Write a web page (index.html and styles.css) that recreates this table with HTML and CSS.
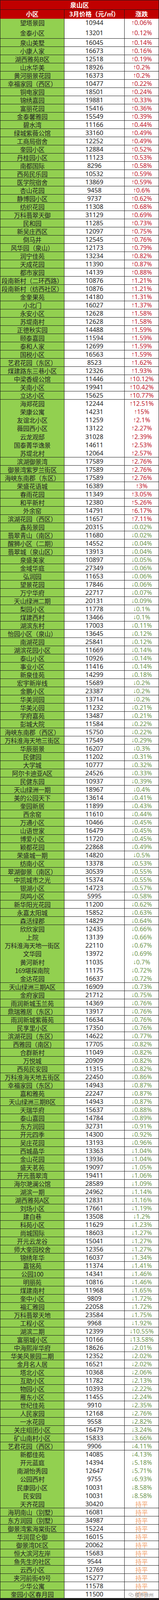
FILE: index.html
```html
<!DOCTYPE html>
<html lang="zh-CN">
<head>
<meta charset="utf-8">
<meta name="viewport" content="width=device-width, initial-scale=1">
<title>泉山区</title>
<link rel="stylesheet" href="styles.css">
</head>
<body>
<div class="sheet">
<div class="grid">
<div class="title">泉山区</div>
<div class="hd">小区</div><div class="hd">3月价格（元/㎡）</div><div class="hd">涨跌</div>
<div class="n">望塔景园</div><div class="p">10944</div><div class="u"><span class="a">↑</span>0.06%</div>
<div class="n">金泰小区</div><div class="p">13201</div><div class="u"><span class="a">↑</span>0.12%</div>
<div class="n">泉山美墅</div><div class="p">16045</div><div class="u"><span class="a">↑</span>0.14%</div>
<div class="n">小康人家</div><div class="p">16673</div><div class="u"><span class="a">↑</span>0.16%</div>
<div class="n">湖西雅苑B区</div><div class="p">12518</div><div class="u"><span class="a">↑</span>0.19%</div>
<div class="n">山水华美</div><div class="p">18926</div><div class="u"><span class="a">↑</span>0.2%</div>
<div class="n">黄河丽景花园</div><div class="p">16373</div><div class="u"><span class="a">↑</span>0.2%</div>
<div class="n">幸福家园（西区）</div><div class="p">10477</div><div class="u"><span class="a">↑</span>0.22%</div>
<div class="n">铜电家园</div><div class="p">18501</div><div class="u"><span class="a">↑</span>0.24%</div>
<div class="n">锦绣嘉园</div><div class="p">19881</div><div class="u"><span class="a">↑</span>0.33%</div>
<div class="n">富丽花园</div><div class="p">15416</div><div class="u"><span class="a">↑</span>0.36%</div>
<div class="n">金泰馨雅园</div><div class="p">15549</div><div class="u"><span class="a">↑</span>0.39%</div>
<div class="n">碧水湾</div><div class="p">11166</div><div class="u"><span class="a">↑</span>0.44%</div>
<div class="n">绿城紫薇公馆</div><div class="p">33160</div><div class="u"><span class="a">↑</span>0.49%</div>
<div class="n">工商局宿舍</div><div class="p">12252</div><div class="u"><span class="a">↑</span>0.49%</div>
<div class="n">奎园小区</div><div class="p">12884</div><div class="u"><span class="a">↑</span>0.52%</div>
<div class="n">丹桂园小区</div><div class="p">11123</div><div class="u"><span class="a">↑</span>0.53%</div>
<div class="n">南都国际</div><div class="p">8296</div><div class="u"><span class="a">↑</span>0.58%</div>
<div class="n">西苑民乐园</div><div class="p">10532</div><div class="u"><span class="a">↑</span>0.59%</div>
<div class="n">医学院宿舍</div><div class="p">13869</div><div class="u"><span class="a">↑</span>0.59%</div>
<div class="n">杏山花园</div><div class="p">9458</div><div class="u"><span class="a">↑</span>0.6%</div>
<div class="n">静博园小区</div><div class="p">9737</div><div class="u"><span class="a">↑</span>0.62%</div>
<div class="n">纺织花园</div><div class="p">11308</div><div class="u"><span class="a">↑</span>0.68%</div>
<div class="n">万科翡翠天御</div><div class="p">31129</div><div class="u"><span class="a">↑</span>0.69%</div>
<div class="n">民和园</div><div class="p">11285</div><div class="u"><span class="a">↑</span>0.73%</div>
<div class="n">新吴庄西区</div><div class="p">12097</div><div class="u"><span class="a">↑</span>0.75%</div>
<div class="n">倒马井</div><div class="p">12545</div><div class="u"><span class="a">↑</span>0.76%</div>
<div class="n">风华园（泉山）</div><div class="p">12173</div><div class="u"><span class="a">↑</span>0.79%</div>
<div class="n">润宁佳苑</div><div class="p">13234</div><div class="u"><span class="a">↑</span>0.82%</div>
<div class="n">天成花园</div><div class="p">11390</div><div class="u"><span class="a">↑</span>0.87%</div>
<div class="n">都市家园</div><div class="p">14139</div><div class="u"><span class="a">↑</span>0.88%</div>
<div class="n">段南新村（二环西路）</div><div class="p">10876</div><div class="u"><span class="a">↑</span>1.21%</div>
<div class="n">段南新村（纺西社区）</div><div class="p">10876</div><div class="u"><span class="a">↑</span>1.21%</div>
<div class="n">金奎果苑</div><div class="p">14180</div><div class="u"><span class="a">↑</span>1.31%</div>
<div class="n">小北门</div><div class="p">16027</div><div class="u"><span class="a">↑</span>1.37%</div>
<div class="n">永安小区</div><div class="p">12628</div><div class="u"><span class="a">↑</span>1.58%</div>
<div class="n">苏堤南村</div><div class="p">12628</div><div class="u"><span class="a">↑</span>1.58%</div>
<div class="n">正德秋实园</div><div class="p">14488</div><div class="u"><span class="a">↑</span>1.59%</div>
<div class="n">颐泰嘉园</div><div class="p">11594</div><div class="u"><span class="a">↑</span>1.59%</div>
<div class="n">泰和人家</div><div class="p">12699</div><div class="u"><span class="a">↑</span>1.59%</div>
<div class="n">国税小区</div><div class="p">16563</div><div class="u"><span class="a">↑</span>1.59%</div>
<div class="n">艺君花园（东区）</div><div class="p">8523</div><div class="u"><span class="a">↑</span>1.62%</div>
<div class="n">煤建路东三巷小区</div><div class="p">12326</div><div class="u"><span class="a">↑</span>1.93%</div>
<div class="n">中梁香缇公馆</div><div class="p">11446</div><div class="u"><span class="a">↑</span>10.12%</div>
<div class="n">关南小区</div><div class="p">19941</div><div class="u"><span class="a">↑</span>10.42%</div>
<div class="n">立达小区</div><div class="p">15625</div><div class="u"><span class="a">↑</span>10.77%</div>
<div class="n">海郑花园</div><div class="p">12244</div><div class="u"><span class="a">↑</span>12.51%</div>
<div class="n">荣康公寓</div><div class="p">14231</div><div class="u"><span class="a">↑</span>15%</div>
<div class="n">友谊北小区</div><div class="p">11259</div><div class="u"><span class="a">↑</span>2.1%</div>
<div class="n">薇园西小区</div><div class="p">13122</div><div class="u"><span class="a">↑</span>2.27%</div>
<div class="n">云龙观邸</div><div class="p">31028</div><div class="u"><span class="a">↑</span>2.39%</div>
<div class="n">国泰菁华逸景</div><div class="p">14611</div><div class="u"><span class="a">↑</span>2.53%</div>
<div class="n">苏堤北村</div><div class="p">12064</div><div class="u"><span class="a">↑</span>2.57%</div>
<div class="n">滨湖御景湾</div><div class="p">17589</div><div class="u"><span class="a">↑</span>2.76%</div>
<div class="n">御景湾紫罗兰街区</div><div class="p">17589</div><div class="u"><span class="a">↑</span>2.76%</div>
<div class="n">海峡东南郡（东区）</div><div class="p">17589</div><div class="u"><span class="a">↑</span>2.76%</div>
<div class="n">荣盛花语城</div><div class="p">16389</div><div class="u"><span class="a">↑</span>3%</div>
<div class="n">春雨花园</div><div class="p">11349</div><div class="u"><span class="a">↑</span>3.05%</div>
<div class="n">和平新村</div><div class="p">12380</div><div class="u"><span class="a">↑</span>5.26%</div>
<div class="n">外余窑</div><div class="p">14791</div><div class="u"><span class="a">↑</span>6.17%</div>
<div class="n">滨湖花园（西区）</div><div class="p">11657</div><div class="u"><span class="a">↑</span>7.11%</div>
<div class="n">鑫苑景园</div><div class="p">20315</div><div class="d"><span class="a">↓</span>0.02%</div>
<div class="n">翡翠青山（南区）</div><div class="p">11680</div><div class="d"><span class="a">↓</span>0.02%</div>
<div class="n">醒狮小区（二期）</div><div class="p">14552</div><div class="d"><span class="a">↓</span>0.04%</div>
<div class="n">翡翠城（泉山区）</div><div class="p">13913</div><div class="d"><span class="a">↓</span>0.04%</div>
<div class="n">泉盛美家</div><div class="p">10897</div><div class="d"><span class="a">↓</span>0.05%</div>
<div class="n">金域华庭</div><div class="p">27349</div><div class="d"><span class="a">↓</span>0.06%</div>
<div class="n">弘润园</div><div class="p">11653</div><div class="d"><span class="a">↓</span>0.06%</div>
<div class="n">望景花园</div><div class="p">17846</div><div class="d"><span class="a">↓</span>0.06%</div>
<div class="n">万宁华府</div><div class="p">22717</div><div class="d"><span class="a">↓</span>0.07%</div>
<div class="n">天山绿洲二期</div><div class="p">20131</div><div class="d"><span class="a">↓</span>0.09%</div>
<div class="n">梨园小区</div><div class="p">11778</div><div class="d"><span class="a">↓</span>0.1%</div>
<div class="n">煤建西村</div><div class="p">13466</div><div class="d"><span class="a">↓</span>0.1%</div>
<div class="n">湖滨东村</div><div class="p">17003</div><div class="d"><span class="a">↓</span>0.11%</div>
<div class="n">怡园小区（泉山）</div><div class="p">13645</div><div class="d"><span class="a">↓</span>0.12%</div>
<div class="n">南湖花园</div><div class="p">25841</div><div class="d"><span class="a">↓</span>0.12%</div>
<div class="n">湖滨花园小区</div><div class="p">11669</div><div class="d"><span class="a">↓</span>0.14%</div>
<div class="n">泰山小区</div><div class="p">10926</div><div class="d"><span class="a">↓</span>0.14%</div>
<div class="n">事业小区</div><div class="p">11416</div><div class="d"><span class="a">↓</span>0.14%</div>
<div class="n">新泉佳苑</div><div class="p">14299</div><div class="d"><span class="a">↓</span>0.18%</div>
<div class="n">宏宇新岸线</div><div class="p">15689</div><div class="d"><span class="a">↓</span>0.2%</div>
<div class="n">金鹏小区</div><div class="p">23387</div><div class="d"><span class="a">↓</span>0.2%</div>
<div class="n">华美润园</div><div class="p">13714</div><div class="d"><span class="a">↓</span>0.2%</div>
<div class="n">华美沁园</div><div class="p">11232</div><div class="d"><span class="a">↓</span>0.21%</div>
<div class="n">学府嘉苑</div><div class="p">13487</div><div class="d"><span class="a">↓</span>0.21%</div>
<div class="n">彭城大院</div><div class="p">11584</div><div class="d"><span class="a">↓</span>0.22%</div>
<div class="n">海峡东南郡（西区）</div><div class="p">15750</div><div class="d"><span class="a">↓</span>0.22%</div>
<div class="n">万科淮海天地三街区</div><div class="p">17549</div><div class="d"><span class="a">↓</span>0.29%</div>
<div class="n">华辰丽景</div><div class="p">16207</div><div class="d"><span class="a">↓</span>0.3%</div>
<div class="n">民健园</div><div class="p">11202</div><div class="d"><span class="a">↓</span>0.31%</div>
<div class="n">大学城</div><div class="p">10777</div><div class="d"><span class="a">↓</span>0.32%</div>
<div class="n">阿尔卡迪亚A区</div><div class="p">24526</div><div class="d"><span class="a">↓</span>0.33%</div>
<div class="n">民健东园</div><div class="p">10937</div><div class="d"><span class="a">↓</span>0.39%</div>
<div class="n">天山绿洲一期</div><div class="p">18967</div><div class="d"><span class="a">↓</span>0.4%</div>
<div class="n">美的公园天下</div><div class="p">13614</div><div class="d"><span class="a">↓</span>0.41%</div>
<div class="n">奎园新居</div><div class="p">11899</div><div class="d"><span class="a">↓</span>0.43%</div>
<div class="n">西余窑</div><div class="p">11610</div><div class="d"><span class="a">↓</span>0.44%</div>
<div class="n">万通小区</div><div class="p">10466</div><div class="d"><span class="a">↓</span>0.45%</div>
<div class="n">山语世家</div><div class="p">16479</div><div class="d"><span class="a">↓</span>0.45%</div>
<div class="n">博爱小区</div><div class="p">11720</div><div class="d"><span class="a">↓</span>0.45%</div>
<div class="n">颖都花园</div><div class="p">22868</div><div class="d"><span class="a">↓</span>0.49%</div>
<div class="n">荣盛城一期</div><div class="p">14820</div><div class="d"><span class="a">↓</span>0.5%</div>
<div class="n">纺南小区</div><div class="p">13378</div><div class="d"><span class="a">↓</span>0.53%</div>
<div class="n">翠湖御景（南区）</div><div class="p">30539</div><div class="d"><span class="a">↓</span>0.55%</div>
<div class="n">中凯城市之光</div><div class="p">15374</div><div class="d"><span class="a">↓</span>0.55%</div>
<div class="n">银湖小区</div><div class="p">14723</div><div class="d"><span class="a">↓</span>0.57%</div>
<div class="n">凤鸣小区</div><div class="p">5995</div><div class="d"><span class="a">↓</span>0.58%</div>
<div class="n">新华阳光花园</div><div class="p">11200</div><div class="d"><span class="a">↓</span>0.62%</div>
<div class="n">永嘉太阳城</div><div class="p">15852</div><div class="d"><span class="a">↓</span>0.63%</div>
<div class="n">森活绿郡</div><div class="p">14829</div><div class="d"><span class="a">↓</span>0.64%</div>
<div class="n">欣欣家园</div><div class="p">12435</div><div class="d"><span class="a">↓</span>0.66%</div>
<div class="n">上院</div><div class="p">13139</div><div class="d"><span class="a">↓</span>0.66%</div>
<div class="n">万科淮海天地一街区</div><div class="p">22110</div><div class="d"><span class="a">↓</span>0.67%</div>
<div class="n">文华园</div><div class="p">13972</div><div class="d"><span class="a">↓</span>0.69%</div>
<div class="n">黄河新村</div><div class="p">11035</div><div class="d"><span class="a">↓</span>0.7%</div>
<div class="n">169堪探南院</div><div class="p">11175</div><div class="d"><span class="a">↓</span>0.72%</div>
<div class="n">金达花园</div><div class="p">16637</div><div class="d"><span class="a">↓</span>0.72%</div>
<div class="n">天山绿洲三期A区</div><div class="p">16909</div><div class="d"><span class="a">↓</span>0.73%</div>
<div class="n">金府家园</div><div class="p">21712</div><div class="d"><span class="a">↓</span>0.75%</div>
<div class="n">雨润新城玉兰苑</div><div class="p">14369</div><div class="d"><span class="a">↓</span>0.76%</div>
<div class="n">鼎瑞雅居（东区）</div><div class="p">13917</div><div class="d"><span class="a">↓</span>0.76%</div>
<div class="n">雨润新城紫薇苑</div><div class="p">16634</div><div class="d"><span class="a">↓</span>0.76%</div>
<div class="n">民享里小区</div><div class="p">17350</div><div class="d"><span class="a">↓</span>0.76%</div>
<div class="n">滨湖花园（东区）</div><div class="p">14622</div><div class="d"><span class="a">↓</span>0.77%</div>
<div class="n">西雅园（南区)</div><div class="p">17705</div><div class="d"><span class="a">↓</span>0.82%</div>
<div class="n">合群新村</div><div class="p">11049</div><div class="d"><span class="a">↓</span>0.82%</div>
<div class="n">万悦城</div><div class="p">20909</div><div class="d"><span class="a">↓</span>0.82%</div>
<div class="n">西苑民安园</div><div class="p">11315</div><div class="d"><span class="a">↓</span>0.82%</div>
<div class="n">万科淮海天地五街区</div><div class="p">22450</div><div class="d"><span class="a">↓</span>0.86%</div>
<div class="n">幸福家园（东区）</div><div class="p">14943</div><div class="d"><span class="a">↓</span>0.87%</div>
<div class="n">嘉和雅苑</div><div class="p">22247</div><div class="d"><span class="a">↓</span>0.87%</div>
<div class="n">天山绿洲三期B区</div><div class="p">14943</div><div class="d"><span class="a">↓</span>0.87%</div>
<div class="n">天瑞华府</div><div class="p">15637</div><div class="d"><span class="a">↓</span>0.88%</div>
<div class="n">泰山嘉园</div><div class="p">14784</div><div class="d"><span class="a">↓</span>0.89%</div>
<div class="n">东方润园</div><div class="p">32731</div><div class="d"><span class="a">↓</span>0.91%</div>
<div class="n">开元四季</div><div class="p">14300</div><div class="d"><span class="a">↓</span>0.92%</div>
<div class="n">吴庄花园</div><div class="p">13193</div><div class="d"><span class="a">↓</span>0.96%</div>
<div class="n">西城晶华</div><div class="p">13363</div><div class="d"><span class="a">↓</span>1.04%</div>
<div class="n">金山花园</div><div class="p">13936</div><div class="d"><span class="a">↓</span>1.04%</div>
<div class="n">盛天茗苑</div><div class="p">19097</div><div class="d"><span class="a">↓</span>1.05%</div>
<div class="n">开元翡翠湾</div><div class="p">19411</div><div class="d"><span class="a">↓</span>1.06%</div>
<div class="n">海尔滟澜公馆</div><div class="p">28589</div><div class="d"><span class="a">↓</span>1.09%</div>
<div class="n">湖滨一期</div><div class="p">24962</div><div class="d"><span class="a">↓</span>1.14%</div>
<div class="n">湖西雅苑A区</div><div class="p">12831</div><div class="d"><span class="a">↓</span>1.16%</div>
<div class="n">刘场小区</div><div class="p">17661</div><div class="d"><span class="a">↓</span>1.19%</div>
<div class="n">建白巷</div><div class="p">13508</div><div class="d"><span class="a">↓</span>1.2%</div>
<div class="n">科苑小区</div><div class="p">11629</div><div class="d"><span class="a">↓</span>1.23%</div>
<div class="n">尚城国际</div><div class="p">18603</div><div class="d"><span class="a">↓</span>1.27%</div>
<div class="n">开元云龙谷</div><div class="p">15041</div><div class="d"><span class="a">↓</span>1.27%</div>
<div class="n">师大奎园校舍</div><div class="p">12356</div><div class="d"><span class="a">↓</span>1.27%</div>
<div class="n">锦绣年华</div><div class="p">16037</div><div class="d"><span class="a">↓</span>1.34%</div>
<div class="n">嘉铭苑</div><div class="p">11374</div><div class="d"><span class="a">↓</span>1.41%</div>
<div class="n">公园100</div><div class="p">14341</div><div class="d"><span class="a">↓</span>1.46%</div>
<div class="n">明丽苑</div><div class="p">10816</div><div class="d"><span class="a">↓</span>1.46%</div>
<div class="n">煤建南村</div><div class="p">11968</div><div class="d"><span class="a">↓</span>1.65%</div>
<div class="n">奎中小区</div><div class="p">9809</div><div class="d"><span class="a">↓</span>1.72%</div>
<div class="n">福汇雅园</div><div class="p">22058</div><div class="d"><span class="a">↓</span>1.72%</div>
<div class="n">万科翡翠天地</div><div class="p">23584</div><div class="d"><span class="a">↓</span>1.75%</div>
<div class="n">工程小区</div><div class="p">9968</div><div class="d"><span class="a">↓</span>1.92%</div>
<div class="n">湖滨二期</div><div class="p">12399</div><div class="d"><span class="a">↓</span>10.55%</div>
<div class="n">富丽城小区</div><div class="p">10166</div><div class="d"><span class="a">↓</span>13.58%</div>
<div class="n">中海熙岸华府</div><div class="p">18626</div><div class="d"><span class="a">↓</span>2.01%</div>
<div class="n">华美风景园二期</div><div class="p">12352</div><div class="d"><span class="a">↓</span>2.02%</div>
<div class="n">金月名人居</div><div class="p">16521</div><div class="d"><span class="a">↓</span>2.02%</div>
<div class="n">塔北小区</div><div class="p">10368</div><div class="d"><span class="a">↓</span>2.06%</div>
<div class="n">互助小区</div><div class="p">11782</div><div class="d"><span class="a">↓</span>2.13%</div>
<div class="n">物园小区</div><div class="p">10393</div><div class="d"><span class="a">↓</span>2.22%</div>
<div class="n">雁东小区</div><div class="p">11455</div><div class="d"><span class="a">↓</span>2.24%</div>
<div class="n">世纪佳苑</div><div class="p">9910</div><div class="d"><span class="a">↓</span>2.35%</div>
<div class="n">人民家园</div><div class="p">12168</div><div class="d"><span class="a">↓</span>2.76%</div>
<div class="n">一水花园</div><div class="p">9558</div><div class="d"><span class="a">↓</span>2.82%</div>
<div class="n">关庄组团小区</div><div class="p">16479</div><div class="d"><span class="a">↓</span>3.24%</div>
<div class="n">矿山南村小区</div><div class="p">15833</div><div class="d"><span class="a">↓</span>3.66%</div>
<div class="n">艺君花园（西区）</div><div class="p">9906</div><div class="d"><span class="a">↓</span>4.11%</div>
<div class="n">新都佳苑</div><div class="p">14085</div><div class="d"><span class="a">↓</span>4.13%</div>
<div class="n">开元蓝庭</div><div class="p">14394</div><div class="d"><span class="a">↓</span>5.18%</div>
<div class="n">南湖怡秀园</div><div class="p">12647</div><div class="d"><span class="a">↓</span>5.71%</div>
<div class="n">公园西村</div><div class="p">9755</div><div class="d"><span class="a">↓</span>6.93%</div>
<div class="n">民康园小区</div><div class="p">10031</div><div class="d"><span class="a">↓</span>8.58%</div>
<div class="n">民安园</div><div class="p">10031</div><div class="d"><span class="a">↓</span>8.58%</div>
<div class="n">天齐花园</div><div class="p">30420</div><div class="f">持平</div>
<div class="n">海玥南山（别墅）</div><div class="p">16081</div><div class="f">持平</div>
<div class="n">东方润园（别墅）</div><div class="p">34987</div><div class="f">持平</div>
<div class="n">御景湾紫海棠街区</div><div class="p">15224</div><div class="f">持平</div>
<div class="n">华润昆仑御</div><div class="p">16015</div><div class="f">持平</div>
<div class="n">御景湾DE区</div><div class="p">20062</div><div class="f">持平</div>
<div class="n">恒大滨河左岸</div><div class="p">15683</div><div class="f">持平</div>
<div class="n">鱼先生的社区</div><div class="p">9544</div><div class="f">持平</div>
<div class="n">云西小区</div><div class="p">12769</div><div class="f">持平</div>
<div class="n">夹河前街49号</div><div class="p">15277</div><div class="f">持平</div>
<div class="n">少华公寓</div><div class="p">11578</div><div class="f">持平</div>
<div class="n">奎园小区春月园</div><div class="p">11500</div><div class="f">持平</div>
</div>
<div class="mark">
<svg class="mark-icon" viewBox="0 0 16 14" aria-hidden="true">
<ellipse cx="6" cy="5.5" rx="5.2" ry="4.3" fill="none" stroke="#9a9a9a" stroke-width="1.1"/>
<ellipse cx="10.5" cy="8.5" rx="4.3" ry="3.6" fill="#fff" stroke="#9a9a9a" stroke-width="1.1"/>
<circle cx="4.2" cy="4.6" r="0.7" fill="#9a9a9a"/>
<circle cx="7.6" cy="4.6" r="0.7" fill="#9a9a9a"/>
</svg>
<span class="mark-text">楼市徐州</span>
</div>
</div>
</body>
</html>
```
FILE: styles.css
```css
:root {
  --ux: calc(100vw / 407);
  --uy: calc(100vh / 4478);
}

html, body {
  margin: 0;
  padding: 0;
  background: #ffffff;
  overflow: hidden;
}

.sheet {
  position: relative;
  width: 100vw;
  height: 100vh;
}

.grid {
  display: grid;
  grid-template-columns: calc(163 * var(--ux)) calc(153 * var(--ux)) 1fr;
  grid-template-rows: calc(25 * var(--uy)) calc(25 * var(--uy)) calc(22 * var(--uy)) calc(31 * var(--uy));
  grid-auto-rows: calc(22 * var(--uy));
  column-gap: var(--ux);
  row-gap: var(--uy);
  padding: var(--uy) var(--ux);
  background: #1a1a1a;
  width: 100vw;
  height: 100vh;
  box-sizing: border-box;
  font-family: "Noto Sans", "Noto Sans CJK SC", sans-serif;
  font-size: calc(16 * var(--ux));
  color: #222222;
  text-align: center;
}

.grid > div {
  display: flex;
  align-items: center;
  justify-content: center;
  min-height: 0;
  line-height: 1;
  white-space: nowrap;
}

.grid > .title {
  grid-column: 1 / -1;
  background: #c00000;
  color: #ffffff;
  font-weight: bold;
  font-family: "Noto Sans CJK SC", sans-serif;
}

.grid > .hd {
  background: #c00000;
  color: #ffffff;
  font-weight: bold;
}

.n {
  background: #92d050;
  font-family: "Noto Sans CJK SC", sans-serif;
  letter-spacing: -0.02em;
}

.p {
  background: #ffffff;
}

.u, .d, .f {
  background: #ffffff;
}

.u {
  color: #c0182c;
}

.d {
  color: #6e9650;
}

.f {
  color: #f2a06a;
  font-family: "Noto Sans CJK SC", sans-serif;
}

.a {
  font-family: "Liberation Sans", sans-serif;
}

.mark {
  position: absolute;
  right: calc(14 * var(--ux));
  bottom: calc(8 * var(--uy));
  display: flex;
  align-items: center;
  gap: calc(2 * var(--ux));
  font-family: "Noto Sans CJK SC", sans-serif;
  font-size: calc(12 * var(--ux));
  line-height: 1;
  color: #8a8a8a;
}

.mark-icon {
  width: calc(14 * var(--ux));
  height: calc(12 * var(--ux));
}

.mark-text {
  text-shadow: 0 0 2px #ffffff, 0 0 2px #ffffff;
}
```
